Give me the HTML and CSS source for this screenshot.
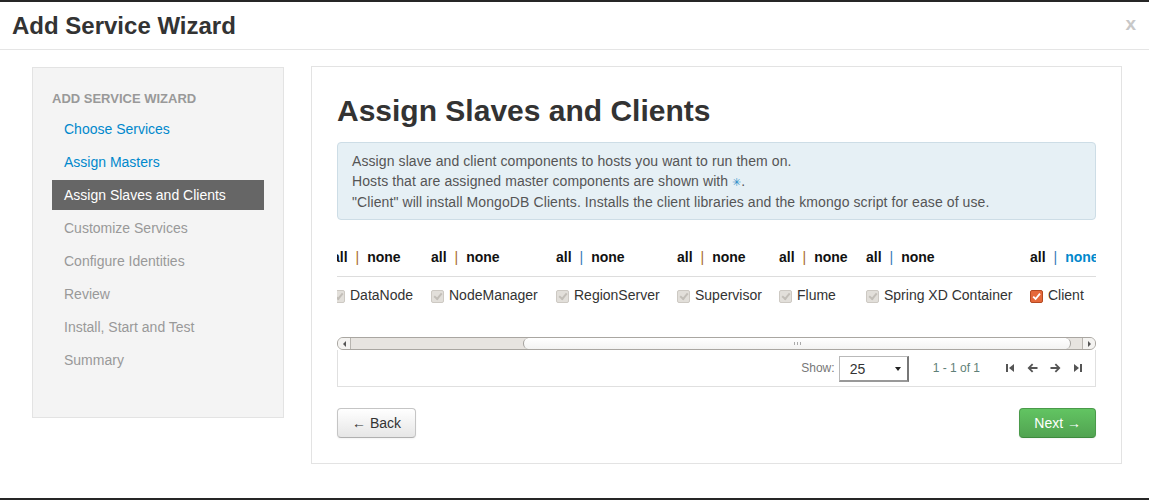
FILE: index.html
```html
<!DOCTYPE html>
<html>
<head>
<meta charset="utf-8">
<link rel="stylesheet" href="styles.css">
</head>
<body>
<div class="modal">
  <div class="modal-header">
    <h3 class="modal-title">Add Service Wizard</h3>
    <span class="close">x</span>
  </div>
  <div class="modal-body">
    <div class="sidebar">
      <div class="nav-heading">ADD SERVICE WIZARD</div>
      <ul class="nav">
        <li class="nav-item done">Choose Services</li>
        <li class="nav-item done">Assign Masters</li>
        <li class="nav-item active">Assign Slaves and Clients</li>
        <li class="nav-item">Customize Services</li>
        <li class="nav-item">Configure Identities</li>
        <li class="nav-item">Review</li>
        <li class="nav-item">Install, Start and Test</li>
        <li class="nav-item">Summary</li>
      </ul>
    </div>
    <div class="main">
      <h2 class="page-title">Assign Slaves and Clients</h2>
      <div class="alert">
        Assign slave and client components to hosts you want to run them on.<br>
        Hosts that are assigned master components are shown with <span class="star">&#10035;</span>.<br>
        "Client" will install MongoDB Clients. Installs the client libraries and the kmongo script for ease of use.
      </div>
      <div class="grid-clip">
        <div class="grid">
          <div class="col c1">
            <div class="hcell"><span class="lnk">all</span><span class="sep brown">|</span><span class="lnk">none</span></div>
            <div class="bcell"><span class="cb"></span>DataNode</div>
          </div>
          <div class="col c2">
            <div class="hcell"><span class="lnk">all</span><span class="sep brown">|</span><span class="lnk">none</span></div>
            <div class="bcell"><span class="cb"></span>NodeManager</div>
          </div>
          <div class="col c3">
            <div class="hcell"><span class="lnk">all</span><span class="sep blue">|</span><span class="lnk">none</span></div>
            <div class="bcell"><span class="cb"></span>RegionServer</div>
          </div>
          <div class="col c4">
            <div class="hcell"><span class="lnk">all</span><span class="sep brown">|</span><span class="lnk">none</span></div>
            <div class="bcell"><span class="cb"></span>Supervisor</div>
          </div>
          <div class="col c5">
            <div class="hcell"><span class="lnk">all</span><span class="sep brown">|</span><span class="lnk">none</span></div>
            <div class="bcell"><span class="cb"></span>Flume</div>
          </div>
          <div class="col c6">
            <div class="hcell"><span class="lnk">all</span><span class="sep blue">|</span><span class="lnk">none</span></div>
            <div class="bcell"><span class="cb"></span>Spring XD Container</div>
          </div>
          <div class="col c7">
            <div class="hcell"><span class="lnk">all</span><span class="sep blue">|</span><span class="lnk active-link">none</span></div>
            <div class="bcell"><span class="cb on"><svg width="9" height="9" viewBox="0 0 9 9"><path d="M1.2 4.6 L3.6 7 L8 1.6" fill="none" stroke="#fff" stroke-width="1.8"/></svg></span>Client</div>
          </div>
        </div>
      </div>
      <div class="scrollbar">
        <div class="sb-btn"><span class="tri-left"></span></div>
        <div class="sb-track">
          <div class="sb-thumb"><span class="grip"></span></div>
        </div>
        <div class="sb-btn right"><span class="tri-right"></span></div>
      </div>
      <div class="table-footer">
        <span class="show-label">Show:</span>
        <div class="select"><span>25</span><span class="sel-arrow"></span></div>
        <span class="page-info">1 - 1 of 1</span>
        <div class="pager">
          <svg width="10" height="10" viewBox="0 0 10 10"><rect x="1" y="1" width="2" height="8" fill="#555"/><path d="M9 1 L4 5 L9 9 Z" fill="#555"/></svg>
          <svg width="11" height="10" viewBox="0 0 11 10"><path d="M5 0.5 L0.5 5 L5 9.5 L6.3 8.2 L4 6 L10.5 6 L10.5 4 L4 4 L6.3 1.8 Z" fill="#555"/></svg>
          <svg width="11" height="10" viewBox="0 0 11 10"><path d="M6 0.5 L10.5 5 L6 9.5 L4.7 8.2 L7 6 L0.5 6 L0.5 4 L7 4 L4.7 1.8 Z" fill="#555"/></svg>
          <svg width="10" height="10" viewBox="0 0 10 10"><path d="M1 1 L6 5 L1 9 Z" fill="#555"/><rect x="7" y="1" width="2" height="8" fill="#555"/></svg>
        </div>
      </div>
      <div class="actions">
        <button class="btn">&larr; Back</button>
        <button class="btn btn-success">Next &rarr;</button>
      </div>
    </div>
  </div>
</div>
</body>
</html>
```
FILE: styles.css
```css
html, body {
  margin: 0;
  padding: 0;
}
body {
  background: #262626;
  font-family: "Liberation Sans", Arial, sans-serif;
  font-size: 14px;
  color: #333;
  width: 1149px;
  height: 500px;
  overflow: hidden;
}
.modal {
  margin-top: 2px;
  height: 496px;
  background: #fff;
}
.modal-header {
  height: 47px;
  border-bottom: 1px solid #e5e5e5;
  display: flex;
  align-items: center;
  justify-content: space-between;
  padding: 0 13px 0 12px;
}
.modal-title {
  margin: 0;
  font-size: 24px;
  font-weight: bold;
  color: #333;
  line-height: 30px;
}
.close {
  font-size: 19px;
  font-weight: bold;
  color: #c8c8c8;
  line-height: 20px;
  margin-bottom: 4px;
}
.modal-body {
  display: flex;
  align-items: flex-start;
  padding: 16px 0 0 32px;
  gap: 27px;
}
.sidebar {
  width: 212px;
  height: 328px;
  background: #f4f4f4;
  border: 1px solid #e3e3e3;
  padding: 21px 19px 0 19px;
  margin-top: 1px;
}
.nav-heading {
  font-size: 13px;
  font-weight: bold;
  color: #999;
  line-height: 20px;
  margin-bottom: 5px;
}
.nav {
  list-style: none;
  margin: 0;
  padding: 0;
  display: flex;
  flex-direction: column;
  gap: 3px;
}
.nav-item {
  height: 30px;
  line-height: 30px;
  padding-left: 12px;
  color: #999;
}
.nav-item.done {
  color: #0088cc;
}
.nav-item.active {
  background: #666;
  color: #fff;
}
.main {
  width: 759px;
  border: 1px solid #e3e3e3;
  padding: 24px 25px 25px 25px;
}
.page-title {
  margin: 0 0 11px 0;
  font-size: 30px;
  line-height: 40px;
  font-weight: bold;
  color: #333;
}
.alert {
  background: #e6f0f5;
  border: 1px solid #cddde6;
  border-radius: 4px;
  padding: 8px 14px 7px 14px;
  line-height: 20px;
  color: #555;
  letter-spacing: 0.09px;
}
.star {
  color: #2f8fc8;
  font-size: 11px;
}
.grid-clip {
  margin-top: 16px;
  height: 101px;
  overflow: hidden;
}
.grid {
  display: flex;
  margin-left: -5px;
}
.col {
  flex: none;
}
.c1 { width: 99px; }
.c2 { width: 125px; }
.c3 { width: 121px; }
.c4 { width: 102px; }
.c5 { width: 87px; }
.c6 { width: 164px; }
.c7 { width: 100px; }
.hcell {
  height: 41px;
  line-height: 20px;
  padding-top: 11px;
  box-sizing: border-box;
  border-bottom: 1px solid #dddddd;
  white-space: nowrap;
  font-weight: bold;
  color: #111;
}
.lnk {
  color: #111;
}
.active-link {
  color: #0088cc;
}
.sep {
  font-weight: normal;
  margin: 0 8px;
}
.sep.brown { color: #a8692a; }
.sep.blue { color: #3a78b8; }
.bcell {
  padding-top: 8px;
  line-height: 20px;
  white-space: nowrap;
  display: flex;
  align-items: center;
  color: #333;
}
.cb {
  width: 11px;
  height: 11px;
  border: 1px solid #cdc9c3;
  background: #e2dfda;
  border-radius: 2px;
  margin-right: 5px;
  margin-top: 2px;
  display: inline-flex;
  align-items: center;
  justify-content: center;
}
.cb::after {
  content: "";
  width: 6px;
  height: 3px;
  border-left: 2px solid #c2beb8;
  border-bottom: 2px solid #c2beb8;
  transform: rotate(-50deg);
  margin-top: -2px;
}
.cb.on {
  background: #e5683a;
  border-color: #b44a22;
}
.cb.on::after {
  content: none;
}
.scrollbar {
  display: flex;
  height: 11px;
  border: 1px solid #a9a6a1;
  border-radius: 6px;
  background: #e7e4e0;
  overflow: hidden;
}
.sb-btn {
  width: 12px;
  flex: none;
  display: flex;
  align-items: center;
  justify-content: center;
  background: #f4f3f1;
  border-right: 1px solid #b8b5b0;
}
.sb-btn.right {
  border-right: 0;
  border-left: 1px solid #b8b5b0;
}
.tri-left {
  width: 0; height: 0;
  border-top: 3px solid transparent;
  border-bottom: 3px solid transparent;
  border-right: 3px solid #555;
}
.tri-right {
  width: 0; height: 0;
  border-top: 3px solid transparent;
  border-bottom: 3px solid transparent;
  border-left: 3px solid #555;
}
.sb-track {
  flex: 1;
  display: flex;
  padding-right: 11px;
}
.sb-thumb {
  margin-left: 172px;
  flex: 1;
  background: linear-gradient(#ffffff, #f3f3f2);
  border: 1px solid #a3a19d;
  border-top: 0;
  border-bottom: 0;
  border-radius: 6px;
  display: flex;
  align-items: center;
  justify-content: center;
}
.grip {
  width: 5px;
  height: 3px;
  border-left: 1px solid #aaa;
  border-right: 1px solid #aaa;
  position: relative;
}
.grip::after {
  content: "";
  position: absolute;
  left: 2px;
  top: 0;
  width: 1px;
  height: 3px;
  background: #aaa;
}
.table-footer {
  height: 36px;
  border: 1px solid #e0e0e0;
  border-top: 0;
  display: flex;
  align-items: center;
  justify-content: flex-end;
  padding-right: 12px;
  font-size: 12px;
  color: #777;
}
.show-label {
  margin-right: 4px;
}
.select {
  border: 1px solid #b9b9b9;
  border-right: 2px solid #777;
  border-bottom: 2px solid #999;
  box-sizing: border-box;
  width: 70px;
  height: 26px;
  display: flex;
  align-items: center;
  justify-content: space-between;
  padding: 2px 6px 0 10px;
  font-size: 14px;
  color: #333;
  margin-top: 1px;
}
.sel-arrow {
  width: 0; height: 0;
  border-left: 3px solid transparent;
  border-right: 3px solid transparent;
  border-top: 4px solid #222;
}
.page-info {
  margin-left: 24px;
  color: #5f7f78;
}
.pager {
  display: flex;
  align-items: center;
  gap: 12px;
  margin-left: 25px;
}
.actions {
  display: flex;
  justify-content: space-between;
  margin-top: 21px;
}
.btn {
  font-family: "Liberation Sans", Arial, sans-serif;
  font-size: 14px;
  height: 30px;
  padding: 0 14px;
  border: 1px solid #c5c5c5;
  border-bottom-color: #b0b0b0;
  border-radius: 4px;
  background: linear-gradient(#ffffff, #e6e6e6);
  color: #333;
  box-shadow: 0 1px 2px rgba(0,0,0,.05);
}
.btn-success {
  background: linear-gradient(#62c462, #51a351);
  border-color: #4a9a4a;
  border-bottom-color: #3d8a3d;
  color: #fff;
}
```
